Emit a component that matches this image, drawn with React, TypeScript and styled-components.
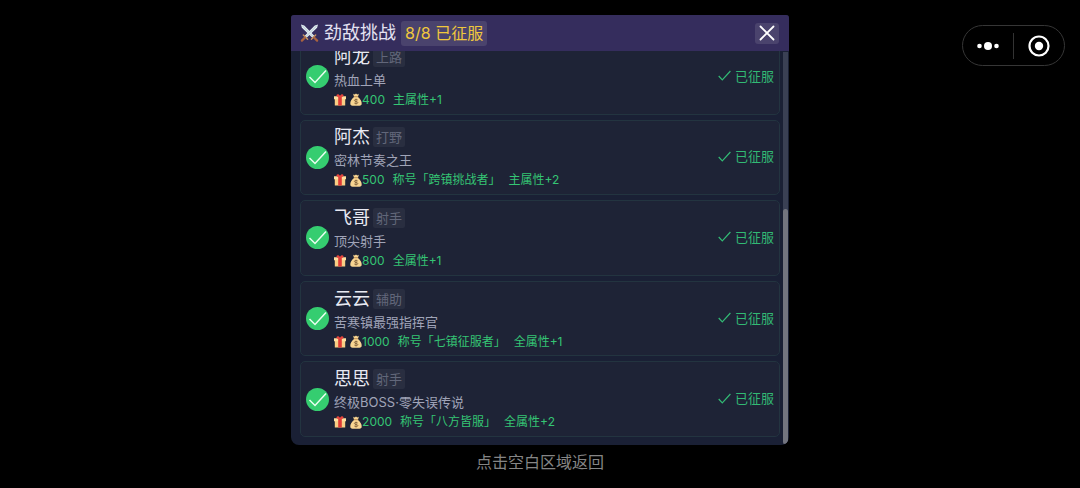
import React from "react";
import styled, { createGlobalStyle } from "styled-components";

const GlobalStyle = createGlobalStyle`
  * { box-sizing: border-box; }
  body {
    margin: 0;
    background: #000;
    font-family: Inter, "Noto Sans CJK SC", sans-serif;
  }
  button { font: inherit; border: 0; padding: 0; cursor: pointer; }
  h1, h2, p, ul { margin: 0; padding: 0; font-weight: 400; }
  svg { display: block; flex: none; }
`;

const Page = styled.main`
  position: relative;
  min-height: 100vh;
  padding-top: 15px;
  display: flex;
  flex-direction: column;
  align-items: center;
  overflow: hidden;
`;

const Dialog = styled.section`
  width: 46.1vw;
  height: calc(100vh - 58px);
  display: flex;
  flex-direction: column;
  flex: none;
  overflow: hidden;
  border-radius: 3px 3px 8px 8px;
  background: #1a2035;
`;

const Header = styled.header`
  display: flex;
  align-items: center;
  flex: none;
  height: 36px;
  padding: 0 10px 0 9px;
  gap: 5px;
  background: #352d5d;
  color: #e4e2f2;
  z-index: 1;
`;

const Title = styled.h1`
  font-size: 18px;
  line-height: 24px;
  white-space: nowrap;
`;

const Progress = styled.span`
  padding: 0 4px;
  border-radius: 3px;
  background: #4a436d;
  color: #f0c83c;
  font-size: 16px;
  line-height: 25px;
  white-space: nowrap;
`;

const CloseButton = styled.button`
  display: grid;
  place-items: center;
  width: 24px;
  height: 21px;
  margin-left: auto;
  border-radius: 3px;
  background: #4a436d;
  color: #fff;
`;

const Body = styled.div`
  display: flex;
  flex: 1;
  min-height: 0;
  overflow: hidden;
`;

const List = styled.ul`
  display: grid;
  grid-auto-rows: 1fr;
  gap: 5px;
  flex: 1;
  margin: -12px 3px 8px 9px;
  list-style: none;
`;

const Track = styled.div`
  display: flex;
  align-items: flex-end;
  width: 6px;
  padding: 1px 1px 1px 0;
  background: #3a4054;
  background-clip: content-box;
`;

const Thumb = styled.div`
  width: 5px;
  height: 60%;
  border-radius: 3px;
  background: #73757f;
`;

const Card = styled.li`
  display: flex;
  align-items: center;
  gap: 5px;
  padding: 0 5px;
  border: 1px solid #233440;
  border-radius: 5px;
  background: #1e2336;
`;

const Info = styled.div`
  flex: 1;
  min-width: 0;
  white-space: nowrap;
`;

const NameRow = styled.div`
  display: flex;
  align-items: center;
  gap: 3px;
  height: 24px;
`;

const Name = styled.h2`
  color: #e8e9f2;
  font-size: 18px;
  line-height: 24px;
`;

const Role = styled.span`
  padding: 0 3px;
  border-radius: 2px;
  background: #292e40;
  color: #62677a;
  font-size: 13px;
  line-height: 20px;
`;

const Motto = styled.p`
  color: #a0a4b8;
  font-size: 13px;
  line-height: 22px;
`;

const Reward = styled.p`
  display: flex;
  align-items: center;
  color: #35c574;
  font-size: 12px;
  line-height: 18px;
`;

const Coins = styled.span`
  display: flex;
  align-items: center;
  margin: 0 8px 0 4px;
`;

const Honor = styled.span`
  margin-right: 8px;
`;

const Status = styled.span`
  display: flex;
  align-items: center;
  gap: 4px;
  color: #32b974;
  font-size: 13px;
  line-height: 18px;
  padding-bottom: 2px;
`;

const Hint = styled.p`
  padding-top: 5px;
  color: #858585;
  font-size: 16px;
  line-height: 24px;
`;

const Capsule = styled.nav`
  position: absolute;
  top: 25px;
  right: 15px;
  display: flex;
  align-items: center;
  width: 103px;
  height: 41px;
  border: 1px solid #363636;
  border-radius: 21px;
`;

const CapsuleButton = styled.button`
  flex: 1;
  display: grid;
  place-items: center;
  height: 26px;
  background: transparent;
  color: #fff;

  & + & { border-left: 1px solid #333; }
`;

const Swords = () => (
  <svg width="19" height="20" viewBox="0 0 20 20" aria-hidden="true">
    <path d="M1 1l3.500 1 10.500 11-2 2L2 4.500z" fill="#e3edf2" />
    <path d="M2 2l12 12" stroke="#9fb4c2" strokeWidth=".8" />
    <path d="M19 1l-3.500 1L5 13l2 2L18 4.500z" fill="#e3edf2" />
    <path d="M18 2L6 14" stroke="#9fb4c2" strokeWidth=".8" />
    <path d="M3.500 12l4.500 4.500M16.500 12L12 16.500" stroke="#c9935f" strokeWidth="1.500" strokeLinecap="round" />
    <path d="M5 15l-3 3M15 15l3 3" stroke="#a9623f" strokeWidth="2.400" strokeLinecap="round" />
  </svg>
);

const Gift = () => (
  <svg width="12" height="12" viewBox="0 0 12 12" aria-hidden="true">
    <path d="M.8 3.500h10.400v8H.8z" fill="#f9cf85" />
    <path d="M0 2.200h12v3H0z" fill="#ffe0a0" />
    <path d="M4.200 2.200h3.600v9.300H4.200z" fill="#df3a36" />
    <path d="M6 3.200C3.600 3.200 2 2.200 2.600 1S5.400.3 6 2C6.600.3 8.800-.2 9.400 1S8.400 3.200 6 3.200z" fill="#e8453c" />
  </svg>
);

const MoneyBag = () => (
  <svg width="12" height="13" viewBox="0 0 12 13" aria-hidden="true">
    <path d="M3.200.8l1.500.6L6 .4l1.300 1L8.800.8 8 4c2.300 1.500 4 4.500 3.700 7-.2 1.200-1 1.700-2.200 1.700h-7C1.300 12.700.5 12.200.3 11 0 8.500 1.700 5.500 4 4z" fill="#f8d592" />
    <path d="M4 3.700h4" stroke="#b5824a" strokeWidth=".9" />
    <path d="M7.700 7c-.8-.8-3.300-.8-3.300.5 0 1.400 3.400.6 3.400 2.100 0 1.300-2.600 1.300-3.500.4M6 5.700v5.600" fill="none" stroke="#80603a" strokeWidth=".9" />
  </svg>
);

const DoneMark = () => (
  <svg width="23" height="23" viewBox="0 0 23 23" role="img" aria-label="已征服">
    <circle cx="11.500" cy="11.500" r="11.500" fill="#35cd70" />
    <path d="M3.500 12l5.500 5.500L20 5.500" fill="none" stroke="#e9fff1" strokeWidth="1.500" />
  </svg>
);

const Tick = () => (
  <svg width="13" height="11" viewBox="0 0 13 11" aria-hidden="true">
    <path d="M.7 6l3.600 3.800L12.400 1" fill="none" stroke="currentColor" strokeWidth="1.200" />
  </svg>
);

const rivals = [
  { name: "阿龙", role: "上路", motto: "热血上单", coins: 400, bonus: "主属性+1" },
  { name: "阿杰", role: "打野", motto: "密林节奏之王", coins: 500, honor: "称号「跨镇挑战者」", bonus: "主属性+2" },
  { name: "飞哥", role: "射手", motto: "顶尖射手", coins: 800, bonus: "全属性+1" },
  { name: "云云", role: "辅助", motto: "苦寒镇最强指挥官", coins: 1000, honor: "称号「七镇征服者」", bonus: "全属性+1" },
  { name: "思思", role: "射手", motto: "终极BOSS·零失误传说", coins: 2000, honor: "称号「八方皆服」", bonus: "全属性+2" },
];

export default function App() {
  return (
    <>
      <GlobalStyle />
      <Page lang="zh-CN">
        <Dialog role="dialog" aria-labelledby="title">
          <Header>
            <Swords />
            <Title id="title">劲敌挑战</Title>
            <Progress>8/8 已征服</Progress>
            <CloseButton aria-label="关闭">
              <svg width="16" height="16" viewBox="0 0 16 16">
                <path d="M1.500 1.500l13 13M14.500 1.500l-13 13" stroke="currentColor" strokeWidth="1.800" strokeLinecap="round" />
              </svg>
            </CloseButton>
          </Header>
          <Body>
            <List>
              {rivals.map((r) => (
                <Card key={r.name}>
                  <DoneMark />
                  <Info>
                    <NameRow>
                      <Name>{r.name}</Name>
                      <Role>{r.role}</Role>
                    </NameRow>
                    <Motto>{r.motto}</Motto>
                    <Reward>
                      <Gift />
                      <Coins><MoneyBag />{r.coins}</Coins>
                      {r.honor && <Honor>{r.honor}</Honor>}
                      <span>{r.bonus}</span>
                    </Reward>
                  </Info>
                  <Status><Tick />已征服</Status>
                </Card>
              ))}
            </List>
            <Track><Thumb /></Track>
          </Body>
        </Dialog>
        <Hint>点击空白区域返回</Hint>
        <Capsule>
          <CapsuleButton aria-label="更多">
            <svg width="22" height="8" viewBox="0 0 22 8" fill="currentColor">
              <circle cx="2.500" cy="4" r="2.300" />
              <circle cx="11" cy="4" r="4" />
              <circle cx="19.500" cy="4" r="2.300" />
            </svg>
          </CapsuleButton>
          <CapsuleButton aria-label="退出">
            <svg width="22" height="22" viewBox="0 0 22 22">
              <circle cx="11" cy="11" r="9.500" fill="none" stroke="currentColor" strokeWidth="2.200" />
              <circle cx="11" cy="11" r="4.200" fill="currentColor" />
            </svg>
          </CapsuleButton>
        </Capsule>
      </Page>
    </>
  );
}
